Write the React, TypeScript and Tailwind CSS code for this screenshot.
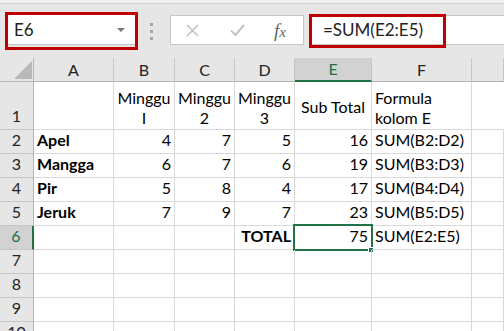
import React from 'react';

const cols = [
  { key: 'A', w: 'w-[80px]' },
  { key: 'B', w: 'w-[61px]' },
  { key: 'C', w: 'w-[60px]' },
  { key: 'D', w: 'w-[60px]' },
  { key: 'E', w: 'w-[77px]' },
  { key: 'F', w: 'w-[100px]' },
  { key: 'G', w: 'flex-1' },
];

type Cell = { text?: string; bold?: boolean; align?: 'left' | 'right' };

const rows: Cell[][] = [
  [{ text: 'Apel', bold: true }, { text: '4', align: 'right' }, { text: '7', align: 'right' }, { text: '5', align: 'right' }, { text: '16', align: 'right' }, { text: 'SUM(B2:D2)' }, {}],
  [{ text: 'Mangga', bold: true }, { text: '6', align: 'right' }, { text: '7', align: 'right' }, { text: '6', align: 'right' }, { text: '19', align: 'right' }, { text: 'SUM(B3:D3)' }, {}],
  [{ text: 'Pir', bold: true }, { text: '5', align: 'right' }, { text: '8', align: 'right' }, { text: '4', align: 'right' }, { text: '17', align: 'right' }, { text: 'SUM(B4:D4)' }, {}],
  [{ text: 'Jeruk', bold: true }, { text: '7', align: 'right' }, { text: '9', align: 'right' }, { text: '7', align: 'right' }, { text: '23', align: 'right' }, { text: 'SUM(B5:D5)' }, {}],
  [{}, {}, {}, { text: 'TOTAL', bold: true, align: 'right' }, { text: '75', align: 'right' }, { text: 'SUM(E2:E5)' }, {}],
  [{}, {}, {}, {}, {}, {}, {}],
  [{}, {}, {}, {}, {}, {}, {}],
  [{}, {}, {}, {}, {}, {}, {}],
  [{}, {}, {}, {}, {}, {}, {}],
];

const RowHeader = ({ n, active }: { n: number; active?: boolean }) => (
  <div
    className={`w-[34px] shrink-0 flex items-end justify-center border-b border-r pb-[1px] ${
      active
        ? 'bg-[#d2d2d2] text-[#217346] border-r-2 border-r-[#217346] border-b-[#c6c6c6]'
        : 'bg-[#e6e6e6] text-[#222] border-[#c6c6c6] border-r-[#b4b4b4]'
    }`}
  >
    {n}
  </div>
);

export default function App() {
  return (
    <div className="w-[504px] h-[331px] overflow-hidden bg-white text-[16px] text-black" style={{ fontFamily: 'Lato, "Liberation Sans", sans-serif' }}>
      {/* formula bar */}
      <div className="h-[58px] bg-[#e6e6e6] flex flex-col">
        <div className="h-[4px] bg-[#eeeeee] border-b border-[#d4d4d4]" />
        <div className="flex items-start pt-[11px]">
          {/* name box */}
          <div className="relative ml-[8px] w-[127px] h-[30px] bg-white border-b border-[#c6c6c6] flex items-center pl-[6px] text-[17px] text-[#222]">
            E6
            <svg className="absolute right-[10px] top-[13px]" width="8" height="4" viewBox="0 0 8 4">
              <path d="M0 0h8L4 4z" fill="#777" />
            </svg>
            <div className="absolute -left-[3px] -top-[3px] w-[133px] h-[38px] border-[3px] border-[#c00000]" />
          </div>
          {/* dots */}
          <div className="ml-[15px] mt-[8px] flex flex-col gap-[4px]">
            <div className="w-[3px] h-[3px] bg-[#a6a6a6]" />
            <div className="w-[3px] h-[3px] bg-[#a6a6a6]" />
            <div className="w-[3px] h-[3px] bg-[#a6a6a6]" />
          </div>
          {/* buttons */}
          <div className="ml-[17px] w-[134px] h-[30px] bg-white border border-[#c6c6c6] flex items-center">
            <svg className="ml-[15px]" width="13" height="13" viewBox="0 0 13 13">
              <path d="M1 1l11 11M12 1L1 12" stroke="#c2c2c2" strokeWidth="1.6" />
            </svg>
            <svg className="ml-[31px]" width="15" height="12" viewBox="0 0 15 12">
              <path d="M1 6.5l4.5 4.5L14 1" stroke="#c2c2c2" strokeWidth="2" fill="none" />
            </svg>
            <span className="ml-[29px] text-[19px] leading-none italic text-[#666]" style={{ fontFamily: '"Liberation Serif", serif' }}>
              f<span className="text-[15px]">x</span>
            </span>
          </div>
          {/* formula input */}
          <div className="relative ml-[5px] flex-1 h-[30px] bg-white border-y border-[#c6c6c6] flex items-center pl-[14px] text-[17px] text-[#222]">
            =SUM(E2:E5)
            <div className="absolute left-0 -top-[2px] w-[137px] h-[34px] border-[3px] border-[#c00000]" />
          </div>
        </div>
      </div>

      {/* grid */}
      <div className="flex flex-col">
        {/* column header */}
        <div className="flex h-[24px]">
          <div className="w-[34px] shrink-0 bg-[#e6e6e6] border-b border-r border-[#b4b4b4] flex items-end justify-end pr-[1px] pb-[2px]">
            <svg width="18" height="18" viewBox="0 0 18 18">
              <path d="M18 0V18H0z" fill="#b9b9b9" />
            </svg>
          </div>
          {cols.map((c) =>
            c.key === 'E' ? (
              <div key={c.key} className={`${c.w} shrink-0 bg-[#d2d2d2] border-r border-[#c6c6c6] border-b-2 border-b-[#217346] flex items-center justify-center text-[#217346] text-[16px]`}>
                {c.key}
              </div>
            ) : (
              <div key={c.key} className={`${c.w} ${c.key === 'G' ? '' : 'shrink-0'} bg-[#e6e6e6] border-r border-b border-[#c6c6c6] border-b-[#b4b4b4] flex items-center justify-center text-[#222] text-[16px]`}>
                {c.key === 'G' ? '' : c.key}
              </div>
            )
          )}
        </div>

        {/* row 1 */}
        <div className="flex h-[48px]">
          <RowHeader n={1} />
          <div className="w-[80px] shrink-0 border-r border-b border-[#d9d9d9]" />
          {['I', '2', '3'].map((s) => (
            <div key={s} className={`${s === 'I' ? 'w-[61px]' : 'w-[60px]'} shrink-0 border-r border-b border-[#d9d9d9] flex flex-col items-center justify-end leading-[20px] pb-[1px] whitespace-nowrap`}>
              <span>Minggu</span>
              <span>{s}</span>
            </div>
          ))}
          <div className="w-[77px] shrink-0 border-r border-b border-[#d9d9d9] flex items-center justify-center pt-[3px] whitespace-nowrap">Sub Total</div>
          <div className="w-[100px] shrink-0 border-r border-b border-[#d9d9d9] flex flex-col justify-end leading-[20px] pl-[3px] pb-[1px]">
            <span>Formula</span>
            <span>kolom E</span>
          </div>
          <div className="flex-1 border-b border-[#d9d9d9]" />
        </div>

        {rows.map((r, i) => {
          const n = i + 2;
          return (
            <div key={n} className="flex h-[24px]">
              <RowHeader n={n} active={n === 6} />
              {r.map((cell, j) => {
                const col = cols[j];
                const selected = n === 6 && col.key === 'E';
                return (
                  <div
                    key={col.key}
                    className={`${col.w} ${col.key === 'G' ? '' : 'shrink-0'} relative border-r border-b border-[#d9d9d9] flex items-end pb-[1px] px-[3px] whitespace-nowrap ${
                      cell.align === 'right' ? 'justify-end' : 'justify-start'
                    } ${cell.bold ? 'font-bold' : ''}`}
                  >
                    {cell.text}
                    {selected && (
                      <>
                        <div className="absolute -left-[2px] -top-[2px] w-[80px] h-[27px] border-2 border-[#217346]" />
                        <div className="absolute -right-[3px] -bottom-[4px] w-[6px] h-[6px] bg-[#217346] border border-white" />
                      </>
                    )}
                  </div>
                );
              })}
            </div>
          );
        })}
      </div>
    </div>
  );
}
